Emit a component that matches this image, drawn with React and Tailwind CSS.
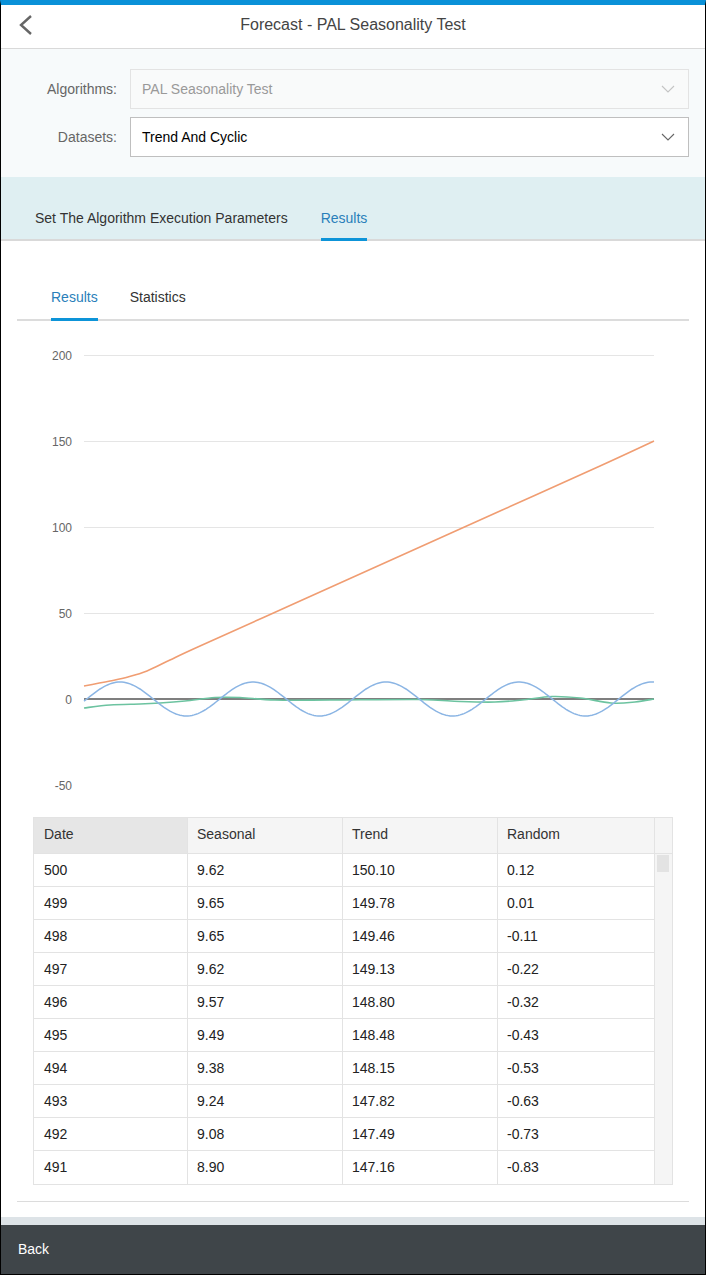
import React from 'react'

const rows = [
  ['500', '9.62', '150.10', '0.12'],
  ['499', '9.65', '149.78', '0.01'],
  ['498', '9.65', '149.46', '-0.11'],
  ['497', '9.62', '149.13', '-0.22'],
  ['496', '9.57', '148.80', '-0.32'],
  ['495', '9.49', '148.48', '-0.43'],
  ['494', '9.38', '148.15', '-0.53'],
  ['493', '9.24', '147.82', '-0.63'],
  ['492', '9.08', '147.49', '-0.73'],
  ['491', '8.90', '147.16', '-0.83'],
]

// chart box origin on the page
const OX = 17
const OY = 321

const smooth = (pts) => {
  const p = pts.map(([x, y]) => [x - OX, y - OY])
  let d = `M${p[0][0]},${p[0][1]}`
  for (let i = 0; i < p.length - 1; i++) {
    const p0 = p[i - 1] || p[i]
    const p1 = p[i]
    const p2 = p[i + 1]
    const p3 = p[i + 2] || p2
    const c1 = [p1[0] + (p2[0] - p0[0]) / 6, p1[1] + (p2[1] - p0[1]) / 6]
    const c2 = [p2[0] - (p3[0] - p1[0]) / 6, p2[1] - (p3[1] - p1[1]) / 6]
    d += ` C${c1[0].toFixed(1)},${c1[1].toFixed(1)} ${c2[0].toFixed(1)},${c2[1].toFixed(1)} ${p2[0]},${p2[1]}`
  }
  return d
}

const seasonal = () => {
  const pts = []
  for (let x = 84; x <= 654; x += 2) {
    pts.push([x, 699 - 17 * Math.cos((2 * Math.PI * (x - 120)) / 133)])
  }
  return pts.map(([x, y], i) => `${i ? 'L' : 'M'}${x - OX},${(y - OY).toFixed(1)}`).join(' ')
}

const trend = [
  [84, 686], [110, 681], [128, 677], [147, 671], [170, 660], [200, 646],
  [300, 601], [400, 556], [500, 511], [600, 466], [654, 441],
]

const random = [
  [84, 708], [110, 705], [140, 704], [160, 703], [185, 701], [215, 697.5],
  [240, 697.5], [275, 700], [330, 700], [420, 699.5], [460, 701.5],
  [495, 702], [522, 700], [552, 696.5], [580, 698], [611, 703], [635, 702], [654, 699],
]

const ticks = [
  ['200', 355], ['150', 441], ['100', 527], ['50', 613], ['0', 699], ['-50', 785],
]

function Chevron({ className }) {
  return (
    <svg viewBox="0 0 14 8" className={className} fill="none" stroke="currentColor" strokeWidth="1.1">
      <path d="M1 1l6 6 6-6" />
    </svg>
  )
}

function Chart() {
  return (
    <svg width="672" height="496" className="block">
      {ticks.map(([label, y]) => (
        <g key={label}>
          <text x={72 - OX} y={y - OY + 5} textAnchor="end" fontSize="12" fill="#666" fontFamily="Liberation Sans, Arial, sans-serif">
            {label}
          </text>
          {label !== '-50' && label !== '0' && (
            <line x1={84 - OX} x2={654 - OX} y1={y - OY + 0.5} y2={y - OY + 0.5} stroke="#e5e5e5" strokeWidth="1" />
          )}
        </g>
      ))}
      <line x1={84 - OX} x2={654 - OX} y1={699 - OY} y2={699 - OY} stroke="#555" strokeWidth="1.6" />
      <path d={smooth(random)} fill="none" stroke="#6cc3a0" strokeWidth="1.6" />
      <path d={seasonal()} fill="none" stroke="#8bb5e4" strokeWidth="1.5" />
      <path d={smooth(trend)} fill="none" stroke="#f09d72" strokeWidth="1.6" />
    </svg>
  )
}

export default function App() {
  return (
    <div className="flex h-[1275px] w-[706px] flex-col border-x border-b border-black border-t-[5px] border-t-[#0a91d8] font-['Liberation_Sans',Arial,sans-serif] text-[14px]">
      <header className="relative flex h-[44px] shrink-0 items-center justify-center border-b border-[#d9d9d9] bg-white">
        <svg viewBox="0 0 14 20" className="absolute left-[17px] top-[10px] h-[20px] w-[14px]" fill="none" stroke="#666" strokeWidth="2.4">
          <path d="M13 1L3 10l10 9" />
        </svg>
        <span className="-mt-[3px] text-[16px] text-[#444]">Forecast - PAL Seasonality Test</span>
      </header>

      <section className="flex shrink-0 flex-col gap-[8px] bg-[#f7fafb] px-[16px] pt-[20px] pb-[20px]">
        <div className="flex items-center gap-[13px]">
          <label className="w-[100px] text-right text-[#666]">Algorithms:</label>
          <div className="flex h-[40px] flex-1 items-center justify-between border border-[#e3e3e3] bg-[#f9fafa] pl-[11px] pr-[13px] text-[#999]">
            <span>PAL Seasonality Test</span>
            <Chevron className="h-[8px] w-[14px] text-[#c4c4c4]" />
          </div>
        </div>
        <div className="flex items-center gap-[13px]">
          <label className="w-[100px] text-right text-[#666]">Datasets:</label>
          <div className="flex h-[40px] flex-1 items-center justify-between border border-[#bfbfbf] bg-white pl-[11px] pr-[13px] text-black">
            <span>Trend And Cyclic</span>
            <Chevron className="h-[8px] w-[14px] text-[#666]" />
          </div>
        </div>
      </section>

      <nav className="flex h-[64px] shrink-0 items-end gap-[33px] border-b-2 border-[#d9d9d9] bg-[#dfeff2] px-[34px]">
        <div className="-mb-[2px] pb-[13px] leading-[20px] text-[#333]">Set The Algorithm Execution Parameters</div>
        <div className="-mb-[2px] border-b-[3px] border-[#0d94d8] pb-[10px] leading-[20px] text-[#2a7fba]">Results</div>
      </nav>

      <main className="flex flex-1 flex-col bg-white px-[16px]">
        <div className="flex gap-[32px] border-b-2 border-[#dcdcdc] pt-[46px] pl-[34px]">
          <div className="-mb-[2px] border-b-[3px] border-[#0d94d8] pb-[11px] leading-[20px] text-[#2a7fba]">Results</div>
          <div className="-mb-[2px] pb-[14px] leading-[20px] text-[#333]">Statistics</div>
        </div>

        <Chart />

        <div className="ml-[16px] w-[640px] border border-[#e3e3e3] text-[#222]">
          <div className="flex h-[36px] border-b border-[#e3e3e3] bg-[#f5f5f5] text-[#333]">
            <div className="flex w-[154px] items-center border-r border-[#e3e3e3] bg-[#e6e6e6] pb-[3px] pl-[10px]">Date</div>
            <div className="flex w-[155px] items-center border-r border-[#e3e3e3] pb-[3px] pl-[9px]">Seasonal</div>
            <div className="flex w-[155px] items-center border-r border-[#e3e3e3] pb-[3px] pl-[9px]">Trend</div>
            <div className="flex w-[157px] items-center border-r border-[#e3e3e3] pb-[3px] pl-[9px]">Random</div>
            <div className="flex-1" />
          </div>
          <div className="flex">
            <div className="w-[621px]">
              {rows.map((r, i) => (
                <div key={r[0]} className={`flex h-[33px] ${i < rows.length - 1 ? 'border-b' : ''} border-[#e3e3e3]`}>
                  <div className="flex w-[154px] items-center border-r border-[#e3e3e3] pl-[10px]">{r[0]}</div>
                  <div className="flex w-[155px] items-center border-r border-[#e3e3e3] pl-[9px]">{r[1]}</div>
                  <div className="flex w-[155px] items-center border-r border-[#e3e3e3] pl-[9px]">{r[2]}</div>
                  <div className="flex w-[157px] items-center border-r border-[#e3e3e3] pl-[9px]">{r[3]}</div>
                </div>
              ))}
            </div>
            <div className="flex-1 bg-[#f5f5f5] pt-[1px] pl-[2px]">
              <div className="h-[17px] w-[12px] bg-[#e3e3e3]" />
            </div>
          </div>
        </div>

        <div className="mt-[16px] border-b border-[#dcdcdc]" />
      </main>

      <div className="h-[15px] shrink-0 bg-white" />
      <div className="h-[8px] shrink-0 bg-[#dde3e7]" />
      <footer className="flex h-[49px] shrink-0 items-center bg-[#3f4549] px-[17px] text-white">Back</footer>
    </div>
  )
}
